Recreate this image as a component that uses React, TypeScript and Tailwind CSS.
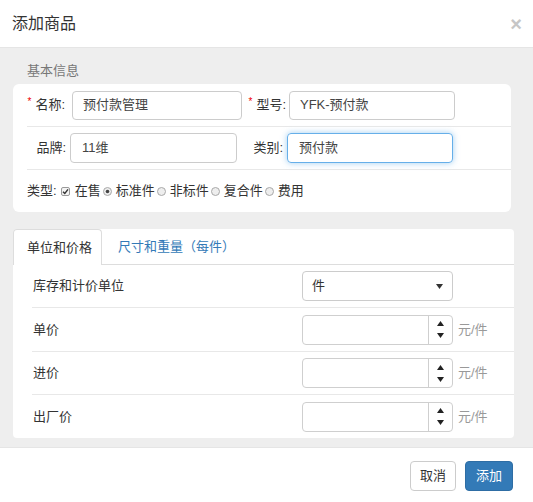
import React from "react";

const font = "font-['Liberation_Sans','Noto_Sans_CJK_SC',sans-serif]";

function Star() {
  return <span className="relative -top-[3px] mr-[4px] text-[10px] leading-none text-[#e00]">*</span>;
}

function CheckBox() {
  return (
    <svg width="9" height="9" viewBox="0 0 9 9" className="mr-[5px] shrink-0">
      <rect x="0.5" y="0.5" width="8" height="8" rx="1.5" fill="#f4f4f4" stroke="#9a9a9a" />
      <path d="M2 4.7 L3.8 6.5 L7 2.3" fill="none" stroke="#333" strokeWidth="1.4" />
    </svg>
  );
}

function Radio({ on }: { on?: boolean }) {
  return (
    <svg width="9" height="9" viewBox="0 0 9 9" className="mr-[4px] ml-[2px] shrink-0">
      <circle cx="4.5" cy="4.5" r="4" fill="#eeeeee" stroke="#a8a8a8" />
      {on && <circle cx="4.5" cy="4.5" r="1.8" fill="#444" />}
    </svg>
  );
}

function NumberBox() {
  return (
    <div className="flex items-center">
      <div className="flex h-[30px] w-[151px] rounded-[4px] border border-[#cfcfcf] bg-white">
        <div className="flex-1" />
        <div className="flex w-[24px] flex-col items-center justify-center gap-[7px] border-l border-[#cfcfcf]">
          <svg width="7" height="5" viewBox="0 0 7 5"><path d="M3.5 0 L7 5 L0 5 Z" fill="#222" /></svg>
          <svg width="7" height="5" viewBox="0 0 7 5"><path d="M0 0 L7 0 L3.5 5 Z" fill="#222" /></svg>
        </div>
      </div>
      <span className="ml-[5px] text-[13px] text-[#999]">元/件</span>
    </div>
  );
}

export default function App() {
  const priceRows = ["单价", "进价", "出厂价"];

  return (
    <div className={`${font} flex h-[502px] w-[533px] flex-col bg-white text-[13px] text-[#333]`}>
      <div className="flex h-[48px] shrink-0 items-center justify-between border-b border-[#e5e5e5] pl-[12px] pr-[11px]">
        <span className="text-[16px] text-[#333]">添加商品</span>
        <span className="text-[20px] font-bold leading-none text-[#c6c6c6]">×</span>
      </div>

      <div className="flex-1 bg-[#eeeeee] pb-[9px]">
        <div className="h-[36px] pl-[27px] pt-[14px] leading-[18px] text-[#777]">基本信息</div>

        <div className="ml-[13px] w-[498px] rounded-[6px] bg-white">
          <div className="flex h-[42px] items-center">
            <div className="flex w-[59px] items-center justify-end pr-[7px]">
              <Star />
              <span>名称:</span>
            </div>
            <div className="flex h-[29px] w-[170px] items-center rounded-[4px] border border-[#ccc] pl-[10px] text-[#444]">预付款管理</div>
            <div className="flex w-[47px] items-center justify-end pr-[3px]">
              <Star />
              <span>型号:</span>
            </div>
            <div className="flex h-[29px] w-[166px] items-center rounded-[4px] border border-[#ccc] pl-[10px] text-[#444]">YFK-预付款</div>
          </div>
          <div className="ml-[14px] h-px bg-[#e8e8e8]" />
          <div className="flex h-[42px] items-center">
            <div className="w-[57px] pr-[4px] text-right">品牌:</div>
            <div className="flex h-[30px] w-[167px] items-center rounded-[4px] border border-[#ccc] pl-[11px] text-[#444]">11维</div>
            <div className="w-[50px] pr-[4px] text-right">类别:</div>
            <div className="flex h-[30px] w-[166px] items-center rounded-[4px] border border-[#66afe9] pl-[11px] text-[#444] shadow-[0_0_6px_rgba(102,175,233,0.6)]">预付款</div>
          </div>
          <div className="ml-[14px] h-px bg-[#e8e8e8]" />
          <div className="flex h-[42px] items-center pl-[14px]">
            <span className="mr-[4px]">类型:</span>
            <CheckBox />
            <span>在售</span>
            <Radio on />
            <span>标准件</span>
            <Radio />
            <span>非标件</span>
            <Radio />
            <span>复合件</span>
            <Radio />
            <span>费用</span>
          </div>
        </div>

        <div className="ml-[13px] mt-[17px] w-[501px] rounded-[4px] bg-white">
          <div className="flex h-[36px]">
            <div className="flex h-[36px] w-[89px] items-center rounded-tl-[4px] rounded-tr-[4px] border-l border-r border-t border-[#ddd] bg-white pl-[13px]">
              单位和价格
            </div>
            <div className="flex flex-1 items-center border-b border-[#ddd] pl-[16px] text-[#337ab7]">
              尺寸和重量（每件）
            </div>
          </div>

          <div className="flex h-[42px] items-center pl-[20px]">
            <span className="w-[269px]">库存和计价单位</span>
            <div className="flex h-[30px] w-[151px] items-center justify-between rounded-[4px] border border-[#ccc] pl-[9px] pr-[9px]">
              <span>件</span>
              <svg width="7" height="5" viewBox="0 0 7 5"><path d="M0 0 L7 0 L3.5 5 Z" fill="#333" /></svg>
            </div>
          </div>

          {priceRows.map((label, i) => (
            <div key={label}>
              <div className="ml-[19px] h-px bg-[#e8e8e8]" />
              <div className={`flex items-center pl-[20px] ${i === 1 ? "h-[42px]" : "h-[43px]"}`}>
                <span className="w-[269px]">{label}</span>
                <NumberBox />
              </div>
            </div>
          ))}
        </div>
      </div>

      <div className="flex h-[55px] shrink-0 items-start justify-end gap-[9px] border-t border-[#e5e5e5] pr-[20px] pt-[13px]">
        <button className="flex h-[30px] w-[46px] items-center justify-center rounded-[4px] border border-[#ccc] bg-white text-[13px] text-[#333]">
          取消
        </button>
        <button className="flex h-[30px] w-[48px] items-center justify-center rounded-[4px] border border-[#2e6da4] bg-[#337ab7] text-[13px] text-white">
          添加
        </button>
      </div>
    </div>
  );
}
